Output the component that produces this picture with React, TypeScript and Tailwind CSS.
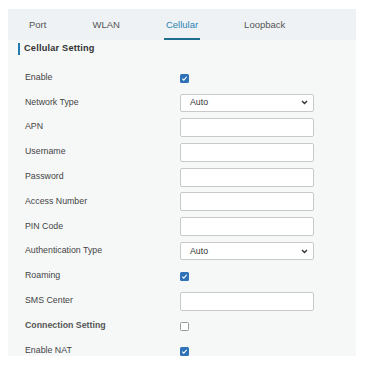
import React from "react";

const Checkbox = ({ checked }: { checked: boolean }) =>
  checked ? (
    <div className="w-[9px] h-[9px] rounded-[1.5px] bg-[#2f72b8] flex items-center justify-center">
      <svg width="7" height="7" viewBox="0 0 8 8">
        <path d="M1.5 4.2 L3.2 5.8 L6.5 2" stroke="white" strokeWidth="1.3" fill="none" />
      </svg>
    </div>
  ) : (
    <div className="w-[9px] h-[9px] rounded-[1.5px] bg-white border border-[#9a9a9a]" />
  );

const Input = () => (
  <div className="w-[134px] h-[19px] bg-white border border-[#c9c9c9] rounded-[2px]" />
);

const Select = () => (
  <div className="w-[134px] h-[18px] bg-white border border-[#c9c9c9] rounded-[2px] flex items-center justify-between pl-[9px] pr-[5px]">
    <span className="text-[8.8px] text-[#333]">Auto</span>
    <svg width="7" height="5" viewBox="0 0 7 5">
      <path d="M1 1 L3.5 3.5 L6 1" stroke="#333" strokeWidth="1.4" fill="none" />
    </svg>
  </div>
);

type Row = { label: string; kind: "check" | "uncheck" | "input" | "select"; bold?: boolean };

const rows: Row[] = [
  { label: "Enable", kind: "check" },
  { label: "Network Type", kind: "select" },
  { label: "APN", kind: "input" },
  { label: "Username", kind: "input" },
  { label: "Password", kind: "input" },
  { label: "Access Number", kind: "input" },
  { label: "PIN Code", kind: "input" },
  { label: "Authentication Type", kind: "select" },
  { label: "Roaming", kind: "check" },
  { label: "SMS Center", kind: "input" },
  { label: "Connection Setting", kind: "uncheck", bold: true },
  { label: "Enable NAT", kind: "check" },
];

export default function App() {
  return (
    <div
      className="w-[368px] h-[365px] bg-white pt-[9px] pl-[8px]"
      style={{ fontFamily: '"Liberation Sans", Arial, sans-serif' }}
    >
      <div className="w-[348px] h-[347px] bg-[#f6f8f8] overflow-hidden">
        <div className="h-[31px] bg-[#eef2f4] flex pl-[19px] gap-[42px]">
          {["Port", "WLAN", "Cellular", "Loopback"].map((t) => (
            <div
              key={t}
              className={
                t === "Cellular"
                  ? "h-full flex items-center px-[2px] border-b-2 border-[#1f6e8e] text-[#2b83b3] text-[9.5px] pt-[3px]"
                  : "h-full flex items-center px-[2px] border-b-2 border-transparent text-[#555] text-[9.5px] pt-[3px]"
              }
            >
              {t}
            </div>
          ))}
        </div>
        <div className="mt-[3px] h-[12px] flex items-center pl-[10px]">
          <div className="w-[2px] h-full bg-[#1f7bb0]" />
          <span className="ml-[4px] text-[9.2px] font-bold text-[#333] tracking-[0.2px]">Cellular Setting</span>
        </div>
        <div className="mt-[10px] flex flex-col">
          {rows.map((r) => (
            <div key={r.label} className="h-[24.8px] flex items-center pl-[17px]">
              <div
                className={
                  r.bold
                    ? "w-[155px] text-[8.8px] font-bold text-[#555]"
                    : "w-[155px] text-[8.8px] text-[#444]"
                }
              >
                {r.label}
              </div>
              <div className="flex items-center">
                {r.kind === "check" && <div className="mt-[2px]"><Checkbox checked /></div>}
                {r.kind === "uncheck" && <div className="mt-[2px]"><Checkbox checked={false} /></div>}
                {r.kind === "input" && <div className="mt-[1px]"><Input /></div>}
                {r.kind === "select" && <div className="mt-[1px]"><Select /></div>}
              </div>
            </div>
          ))}
        </div>
      </div>
    </div>
  );
}
